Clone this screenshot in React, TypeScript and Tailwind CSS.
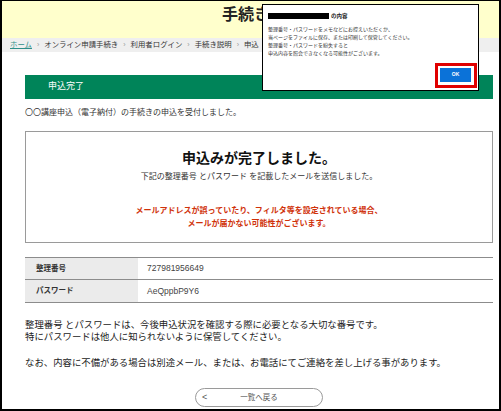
import React from 'react';

const crumbs = ['オンライン申請手続き', '利用者ログイン', '手続き説明', '申込'];

const dialogLines = [
  '整理番号・パスワードをメモなどにお控えいただくか、',
  '当ページをファイルに保存、または印刷して保管してください。',
  '整理番号・パスワードを紛失すると',
  '申込内容を照会できなくなる可能性がございます。',
];

const App: React.FC = () => {
  return (
    <div className="relative w-[501px] h-[411px] overflow-hidden bg-white border-black border-t border-l-2 border-r-2 border-b-2 font-['Liberation_Sans','Noto_Sans_CJK_JP',sans-serif] text-[#333]">
      {/* Header */}
      <div className="h-[37px] bg-[#ffffcc] pl-[220px] pt-[5px]">
        <h1 className="text-[16px] leading-[18px] font-bold text-[#222] whitespace-nowrap">手続き</h1>
      </div>

      {/* Breadcrumb */}
      <div className="h-[14px] bg-[#efefef] pl-[8px] flex items-center text-[7.4px] leading-[14px] whitespace-nowrap">
        <span className="text-[#2f8f8a] underline">ホーム</span>
        {crumbs.map(c => (
          <React.Fragment key={c}>
            <span className="mx-[5px] text-[#999] text-[7px]">›</span>
            <span>{c}</span>
          </React.Fragment>
        ))}
      </div>

      {/* Content */}
      <div className="pl-[23px] pr-[6px]">
        <div className="mt-[23px] h-[24px] bg-[#008459] pl-[23px] flex items-center">
          <span className="text-white text-[9px]">申込完了</span>
        </div>

        <p className="mt-[8px] text-[8px] leading-[12px]">〇〇講座申込（電子納付）の手続きの申込を受付しました。</p>

        <div className="mt-[12px] h-[112px] border border-[#9a9a9a] flex flex-col items-center pt-[17px]">
          <div className="text-[14px] leading-[18px] font-bold text-[#111]">申込みが完了しました。</div>
          <div className="mt-[4px] text-[8px] leading-[12px]">下記の整理番号 とパスワード を記載したメールを送信しました。</div>
          <div className="mt-[21px] text-[8px] leading-[13px] font-bold text-[#d0320a] text-center">
            <div>メールアドレスが誤っていたり、フィルタ等を設定されている場合、</div>
            <div>メールが届かない可能性がございます。</div>
          </div>
        </div>

        {/* Table */}
        <div className="mt-[14px] border-t border-b border-[#8c8c8c] text-[8px]">
          <div className="flex h-[22px] border-b border-[#8c8c8c]">
            <div className="w-[113px] bg-[#ebebeb] pl-[11px] flex items-center font-bold text-[7.5px]">整理番号</div>
            <div className="flex-1 pl-[9px] flex items-center text-[8.5px] text-[#444]">727981956649</div>
          </div>
          <div className="flex h-[22px]">
            <div className="w-[113px] bg-[#ebebeb] pl-[11px] flex items-center font-bold text-[7.5px]">パスワード</div>
            <div className="flex-1 pl-[9px] flex items-center text-[8.5px] text-[#444]">AeQppbP9Y6</div>
          </div>
        </div>

        {/* Notes */}
        <div className="mt-[16px] text-[9.4px] leading-[12px] text-[#222]">
          <p>整理番号 とパスワードは、今後申込状況を確認する際に必要となる大切な番号です。</p>
          <p>特にパスワードは他人に知られないように保管してください。</p>
          <p className="mt-[14px]">なお、内容に不備がある場合は別途メール、または、お電話にてご連絡を差し上げる事があります。</p>
        </div>

        <div className="mt-[19px] flex justify-center">
          <button className="w-[128px] h-[19px] rounded-full border border-[#9a9a9a] flex items-center px-[6px] text-[7.5px] text-[#555]">
            <span className="w-[10px] text-left text-[9px]">&lt;</span>
            <span className="flex-1 text-center">一覧へ戻る</span>
            <span className="w-[10px]" />
          </button>
        </div>
      </div>

      {/* Dialog */}
      <div className="absolute left-[260px] top-[3px] w-[217px] h-[87px] bg-white border border-black pl-[5px] pt-[8px]">
        <div className="flex items-center h-[6px]">
          <div className="w-[61px] h-[6px] bg-black" />
          <span className="ml-[2px] text-[5.5px] leading-[6px] font-bold text-[#222]">の内容</span>
        </div>
        <div className="mt-[6px] text-[5px] leading-[8px] text-[#333]">
          {dialogLines.map(l => (
            <div key={l} className="whitespace-nowrap">{l}</div>
          ))}
        </div>
        <div className="mt-[6px] flex justify-end pr-[1px]">
          <div className="w-[42px] h-[25px] border-[3px] border-[#e00000] pl-[2px] pt-[2px]">
            <div className="w-[31px] h-[14px] bg-[#0b72d8] flex items-center justify-center text-white text-[5px] font-bold">OK</div>
          </div>
        </div>
      </div>
    </div>
  );
};

export default App;
